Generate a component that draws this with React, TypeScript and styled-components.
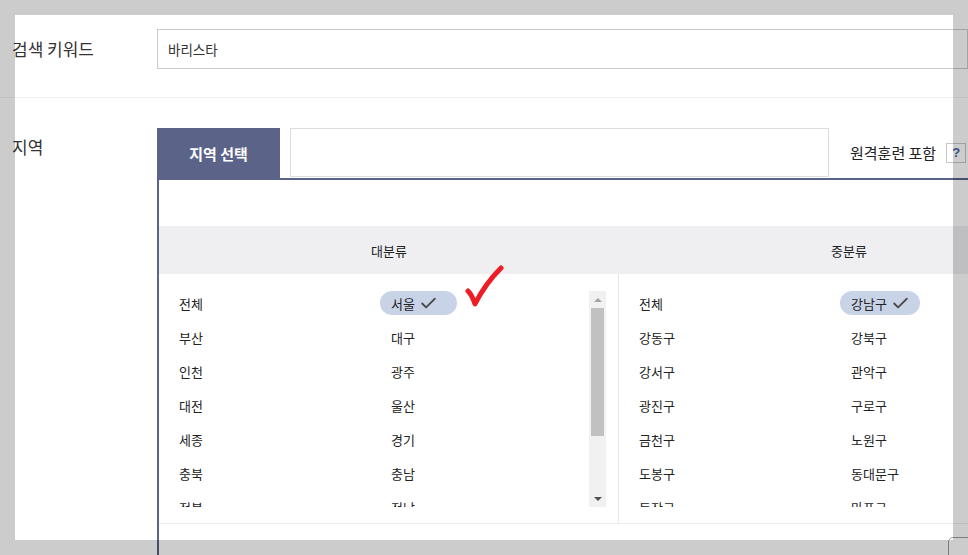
import * as React from 'react'
import styled, { createGlobalStyle } from 'styled-components'
import { Check } from 'lucide-react'

const GlobalStyle = createGlobalStyle`
  html, body {
    margin: 0;
    padding: 0;
    background: #fff;
  }
  body {
    font-family: 'Noto Sans CJK KR', 'Noto Sans', sans-serif;
    color: #333;
  }
`

const NAVY = '#5b6389'

const Page = styled.div`
  position: relative;
  width: 968px;
  height: 555px;
  overflow: hidden;
  background: #fff;
`

const Row = styled.div<{ $first?: boolean }>`
  display: flex;
  align-items: ${p => (p.$first ? 'center' : 'flex-start')};
  height: ${p => (p.$first ? '98px' : 'auto')};
  padding: ${p => (p.$first ? '0 0 0 12px' : '30px 0 0 12px')};
  border-bottom: ${p => (p.$first ? '1px solid #f0f0f0' : 'none')};
  box-sizing: border-box;
`

const Label = styled.div`
  flex: 0 0 145px;
  font-size: 17px;
  line-height: 38px;
  color: #333;
`

const KeywordInput = styled.div`
  width: 900px;
  height: 40px;
  margin-top: 1px;
  box-sizing: border-box;
  border: 1px solid #ccc;
  padding: 0 10px;
  display: flex;
  align-items: center;
  font-size: 13.5px;
  color: #333;
`

const Field = styled.div`
  flex: 0 0 900px;
  display: flex;
  flex-direction: column;
`

const TabBar = styled.div`
  display: flex;
  align-items: flex-start;
  height: 50px;
  border-bottom: 2px solid ${NAVY};
`

const Tab = styled.div`
  width: 123px;
  height: 50px;
  background: ${NAVY};
  color: #fff;
  font-size: 15px;
  font-weight: 700;
  display: flex;
  align-items: center;
  justify-content: center;
`

const SearchBox = styled.div`
  width: 539px;
  height: 49px;
  margin-left: 10px;
  box-sizing: border-box;
  border: 1px solid #ddd;
  background: #fff;
`

const Remote = styled.div`
  display: flex;
  align-items: center;
  gap: 10px;
  height: 49px;
  margin-left: 21px;
  font-size: 15px;
  color: #222;
`

const HelpBox = styled.span`
  width: 20px;
  height: 20px;
  box-sizing: border-box;
  border: 1px solid #c8c8c8;
  color: #4b62a8;
  font-size: 13px;
  font-weight: 700;
  display: flex;
  align-items: center;
  justify-content: center;
  font-family: 'Liberation Sans', sans-serif;
`

const Panel = styled.div`
  border-left: 2px solid ${NAVY};
  padding-top: 46px;
  height: 400px;
`

const Grid = styled.div`
  display: grid;
  grid-template-columns: 460px 460px;
`

const HeadCell = styled.div`
  height: 48px;
  background: #efeff2;
  display: flex;
  align-items: center;
  justify-content: center;
  font-size: 13px;
  color: #222;
`

const Column = styled.div<{ $divider?: boolean }>`
  height: 250px;
  box-sizing: border-box;
  border-bottom: 1px solid #eee;
  border-right: ${p => (p.$divider ? '1px solid #e6e6e6' : 'none')};
  padding: 17px 12px 0 9px;
  display: flex;
  align-items: flex-start;
`

const Viewport = styled.div`
  flex: 1;
  height: 216px;
  overflow: hidden;
`

const ItemGrid = styled.div`
  display: grid;
  grid-template-columns: 212px 212px;
  row-gap: 10px;
`

const Item = styled.div<{ $selected?: boolean }>`
  justify-self: start;
  display: inline-flex;
  align-items: center;
  gap: 4px;
  height: 24px;
  box-sizing: border-box;
  min-width: ${p => (p.$selected ? '77px' : '0')};
  padding: ${p => (p.$selected ? '0 10px 0 11px' : '0 11px')};
  border-radius: 12px;
  background: ${p => (p.$selected ? '#c9d3e8' : 'transparent')};
  font-size: 13px;
  color: #222;
  white-space: nowrap;
`

const Scrollbar = styled.div`
  flex: 0 0 17px;
  height: 216px;
  background: #f1f1f1;
  display: flex;
  flex-direction: column;
  align-items: center;
`

const Arrow = styled.div<{ $down?: boolean; $dim?: boolean }>`
  height: 17px;
  width: 15px;
  display: flex;
  align-items: center;
  justify-content: center;
  &::before {
    content: '';
    border-left: 4px solid transparent;
    border-right: 4px solid transparent;
    ${p =>
      p.$down
        ? `border-top: 4px solid ${p.$dim ? '#a3a3a3' : '#505050'};`
        : `border-bottom: 4px solid ${p.$dim ? '#a3a3a3' : '#505050'};`}
  }
`

const Thumb = styled.div`
  width: 13px;
  height: 128px;
  background: #c1c1c1;
`

const Spacer = styled.div`
  flex: 1;
`

const Annotation = styled.svg`
  position: absolute;
  left: 465px;
  top: 265px;
`

const FloatingBox = styled.div`
  position: absolute;
  left: 948px;
  top: 537px;
  width: 44px;
  height: 44px;
  box-sizing: border-box;
  border: 1px solid #9a9a9a;
  border-radius: 5px;
  background: #fff;
`

const Overlay = styled.div`
  position: absolute;
  inset: 0;
  box-sizing: border-box;
  border: 15px solid rgba(0, 0, 0, 0.2);
  pointer-events: none;
`

const regions = ['전체', '서울', '부산', '대구', '인천', '광주', '대전', '울산', '세종', '경기', '충북', '충남', '전북', '전남']
const districts = ['전체', '강남구', '강동구', '강북구', '강서구', '관악구', '광진구', '구로구', '금천구', '노원구', '도봉구', '동대문구', '동작구', '마포구']

const List = ({ items, selected }: { items: string[]; selected: string }) => (
  <ItemGrid>
    {items.map(name => (
      <Item key={name} $selected={name === selected}>
        {name}
        {name === selected && <Check size={19} strokeWidth={2.3} color="#4a4a4a" />}
      </Item>
    ))}
  </ItemGrid>
)

export default function App() {
  return (
    <Page>
      <GlobalStyle />
      <Row $first>
        <Label>검색 키워드</Label>
        <KeywordInput>바리스타</KeywordInput>
      </Row>
      <Row>
        <Label>지역</Label>
        <Field>
          <TabBar>
            <Tab>지역 선택</Tab>
            <SearchBox />
            <Remote>
              원격훈련 포함
              <HelpBox>?</HelpBox>
            </Remote>
          </TabBar>
          <Panel>
            <Grid>
              <HeadCell>대분류</HeadCell>
              <HeadCell>중분류</HeadCell>
              <Column $divider>
                <Viewport>
                  <List items={regions} selected="서울" />
                </Viewport>
                <Scrollbar>
                  <Arrow $dim />
                  <Thumb />
                  <Spacer />
                  <Arrow $down />
                </Scrollbar>
              </Column>
              <Column>
                <Viewport>
                  <List items={districts} selected="강남구" />
                </Viewport>
              </Column>
            </Grid>
          </Panel>
        </Field>
      </Row>
      <Annotation width="40" height="44" viewBox="0 0 40 44">
        <path
          d="M3 26 Q7 30 10 39 Q20 19 36 3"
          fill="none"
          stroke="#ee1c25"
          strokeWidth="5"
          strokeLinecap="round"
          strokeLinejoin="round"
        />
      </Annotation>
      <FloatingBox />
      <Overlay />
    </Page>
  )
}
